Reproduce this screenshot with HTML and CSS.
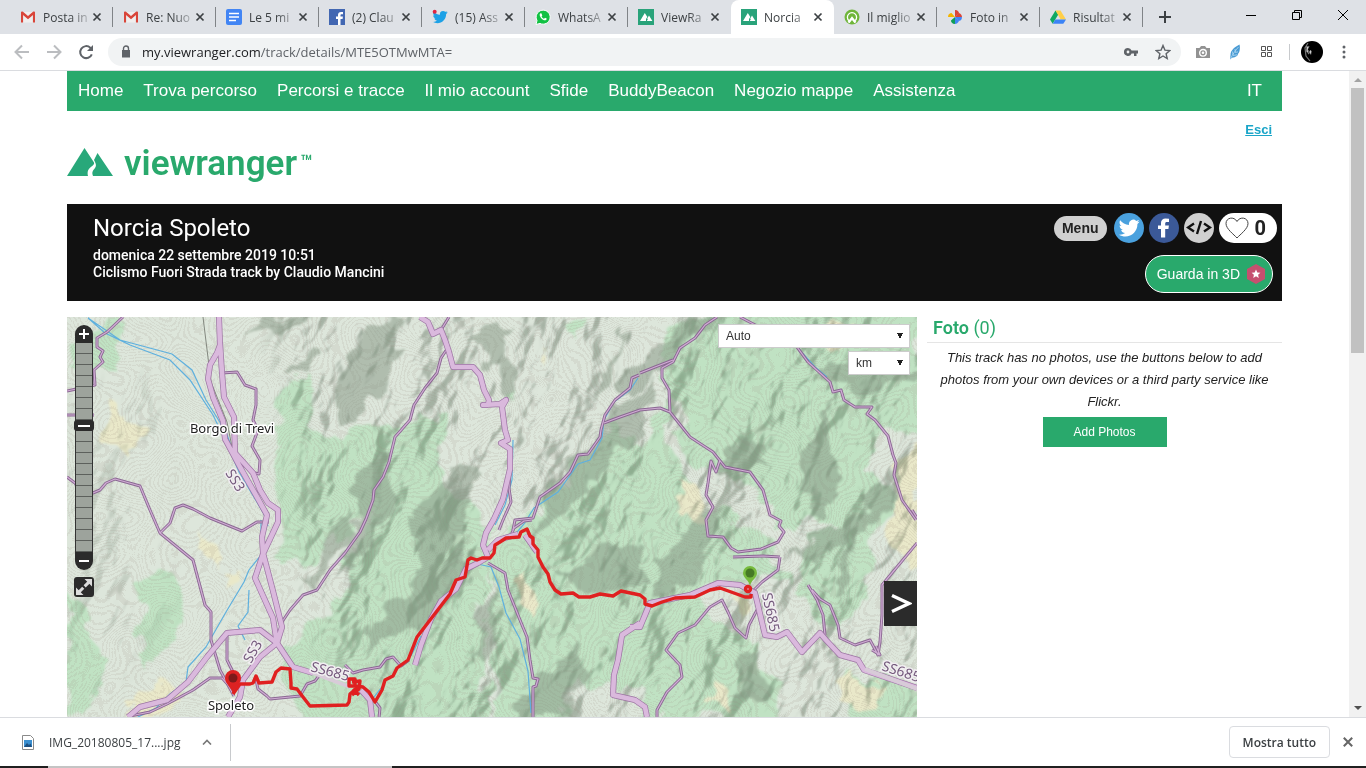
FILE: index.html
```html
<!DOCTYPE html>
<html lang="it">
<head>
  <meta charset="utf-8">
  <title>Norcia Spoleto</title>
  <link rel="stylesheet" href="styles.css">
</head>

<body>
  <svg class="defs" width="0" height="0" aria-hidden="true">
    <symbol id="gmail" viewBox="0 0 16 16">
      <path d="M1.500 3h13v10.500h-13z" fill="#f0eeee"/>
      <path d="M3 13.500V5l5 4 5-4v8.500" fill="none" stroke="#d9d6d6"/>
      <path d="M1 3.500v10h2V6l5 4.300L13 6v7.500h2v-10c0-1-1.200-1.300-2-.7L8 7 3 2.800c-.8-.6-2-.3-2 .7z" fill="#d9453a"/>
    </symbol>
    <symbol id="mountain" viewBox="0 0 16 16">
      <path d="M0 0h16v16H0z" fill="#29a37a"/>
      <path d="M2 12l4.800-8 2.500 4-1.300 2v2zM8.800 12l1-1.700-.6-.8L11 6.500l3.400 5.500z" fill="#fff"/>
    </symbol>
    <symbol id="close" viewBox="0 0 10 10">
      <path d="M1.500 1.500l7 7M8.500 1.500l-7 7" fill="none" stroke="currentColor" stroke-width="1.700"/>
    </symbol>
    <symbol id="bird" viewBox="0 0 24 24">
      <path d="M23.600 5c-.8.400-1.700.6-2.700.8 1-.6 1.700-1.500 2-2.600-.9.500-1.900.9-3 1.100A4.700 4.700 0 0 0 12 8.600C8 8.400 4.600 6.500 2.300 3.600c-1.200 2.100-.6 4.900 1.500 6.300-.8 0-1.500-.2-2.100-.6 0 2.200 1.500 4.300 3.800 4.700-.7.200-1.400.2-2.100.1.600 1.900 2.300 3.200 4.400 3.300A9.500 9.500 0 0 1 .8 19.300c10.300 5.500 20.600-1.700 20.400-11.700 1-.7 1.800-1.600 2.400-2.600z"/>
    </symbol>
  </svg>

  <nav class="tabs" aria-label="Schede">
    <div class="tab">
      <svg class="favicon"><use href="#gmail"/></svg><a href="#">Posta in</a>
      <button aria-label="Chiudi"><svg><use href="#close"/></svg></button>
    </div>
    <div class="tab">
      <svg class="favicon"><use href="#gmail"/></svg><a href="#">Re: Nuo</a>
      <button aria-label="Chiudi"><svg><use href="#close"/></svg></button>
    </div>
    <div class="tab">
      <svg class="favicon" viewBox="0 0 16 16"><rect width="16" height="16" rx="2" fill="#4285f4"/><path d="M3 4.500h10M3 8h10M3 11.500h7" stroke="#fff" stroke-width="1.600"/></svg><a href="#">Le 5 mi</a>
      <button aria-label="Chiudi"><svg><use href="#close"/></svg></button>
    </div>
    <div class="tab">
      <svg class="favicon" viewBox="0 0 16 16"><path d="M0 0h16v16H0z" fill="#4267b2"/><path d="M9 16v-6H7V7.600h2V6c0-2 1.200-3.100 3-3.100l2 .1v2.200h-1.300c-1 0-1.200.5-1.200 1.200v1.200h2.400l-.3 2.400h-2.100v6z" fill="#fff"/></svg><a href="#">(2) Clau</a>
      <button aria-label="Chiudi"><svg><use href="#close"/></svg></button>
    </div>
    <div class="tab">
      <svg class="favicon" viewBox="0 0 24 24" fill="#1da1e6"><use href="#bird"/><circle cx="4" cy="4" r="3" fill="#e02440"/></svg><a href="#">(15) Ass</a>
      <button aria-label="Chiudi"><svg><use href="#close"/></svg></button>
    </div>
    <div class="tab">
      <svg class="favicon" viewBox="0 0 16 16"><path d="M1 15.500l1-4A7 7 0 1 1 5 14.400z" fill="#12c144" stroke="#fff"/><path d="M5.500 4.300c-1.200.8-1.200 2.500.5 4.600 1.700 2 3.800 2.900 5 2.100.8-.5.800-1.200.6-1.400l-1.600-.8-.9 1c-1-.4-2-1.300-2.500-2.400l.7-.9-.7-1.800c-.3-.5-.7-.6-1.100-.4z" fill="#fff"/></svg><a href="#">WhatsA</a>
      <button aria-label="Chiudi"><svg><use href="#close"/></svg></button>
    </div>
    <div class="tab bare">
      <svg class="favicon"><use href="#mountain"/></svg><a href="#">ViewRa</a>
      <button aria-label="Chiudi"><svg><use href="#close"/></svg></button>
    </div>
    <div class="tab active">
      <svg class="favicon"><use href="#mountain"/></svg><a href="#">Norcia</a>
      <button aria-label="Chiudi"><svg><use href="#close"/></svg></button>
    </div>
    <div class="tab">
      <svg class="favicon" viewBox="0 0 16 16"><circle cx="8" cy="8" r="7.500" fill="#6fb53a"/><path d="M5 11.800A4.600 4.600 0 1 1 11 11.800" fill="none" stroke="#fff" stroke-width="1.300"/><path d="M3.500 13L8 7.300l4.500 5.700-2 1.300L8 11l-2.500 3.300z" fill="#fff"/></svg><a href="#">Il miglio</a>
      <button aria-label="Chiudi"><svg><use href="#close"/></svg></button>
    </div>
    <div class="tab">
      <svg class="favicon" viewBox="0 0 16 16"><path d="M8 8V1c3 0 4 2 4 3.500L8 8z" fill="#db4437"/><path d="M8 8h7c0 3-2 4-3.500 4z" fill="#4285f4"/><path d="M8 8v7c-3 0-4-2-4-3.500z" fill="#0f9d58"/><path d="M8 8H1c0-3 2-4 3.500-4z" fill="#f4b400"/><path d="M8 8l4-4c2 1 3 2.500 3 4z" fill="#db4437"/><path d="M8 8l4 4c-1 2-2.500 3-4 3z" fill="#4285f4"/></svg><a href="#">Foto in</a>
      <button aria-label="Chiudi"><svg><use href="#close"/></svg></button>
    </div>
    <div class="tab">
      <svg class="favicon" viewBox="0 0 16 16"><path d="M5.500 1.500L0 10.500l2.700 4.200L8.300 5.500z" fill="#11a861"/><path d="M5.500 1.500h5l5.500 9h-5.300z" fill="#ffcf48"/><path d="M5.400 10.500H16l-2.700 4.200H2.700z" fill="#3b83f6"/></svg><a href="#">Risultat</a>
      <button aria-label="Chiudi"><svg><use href="#close"/></svg></button>
    </div>
    <button class="new-tab" aria-label="Nuova scheda"><svg width="12" height="12"><path d="M6 0v12M0 6h12" stroke="#3c4043" stroke-width="2"/></svg></button>
    <div class="window-buttons">
      <button aria-label="Riduci"><svg width="10" height="10"><path d="M0 5.500h10" stroke="#000"/></svg></button>
      <button aria-label="Ripristina"><svg width="10" height="10"><path d="M.5 2.500h7v7h-7zM2.500 2V.5h7v7H8" fill="none" stroke="#000"/></svg></button>
      <button aria-label="Chiudi finestra"><svg width="10" height="10"><path d="M0 0l10 10M10 0L0 10" stroke="#000"/></svg></button>
    </div>
  </nav>

  <div class="toolbar">
    <button aria-label="Indietro"><svg class="off" width="16" height="16" viewBox="0 0 16 16"><path d="M15 8H2M8 1.500L1.500 8 8 14.500"/></svg></button>
    <button aria-label="Avanti"><svg class="off" width="16" height="16" viewBox="0 0 16 16"><path d="M1 8h13M8 1.500L14.500 8 8 14.500"/></svg></button>
    <button aria-label="Ricarica"><svg width="16" height="16" viewBox="0 0 16 16"><path d="M13.800 10.300A6 6 0 1 1 12.300 3.700L14 5.500" fill="none" stroke="#5f6368" stroke-width="2"/><path d="M15 1v6H9z" fill="#5f6368"/></svg></button>
    <div class="omnibox">
      <svg width="10" height="14" viewBox="0 0 10 14"><path d="M1 5h8v7.500H1z" fill="#5f6368"/><path d="M2.500 5.500V3.500a2.500 2.500 0 0 1 5 0v2" fill="none" stroke="#5f6368" stroke-width="1.400"/></svg>
      <a class="url" href="#">my.viewranger.com<span>/track/details/MTE5OTMwMTA=</span></a>
      <button aria-label="Password"><svg width="14" height="10" viewBox="0 0 14 10"><path d="M4 1a4 4 0 1 0 3.600 5.500H10V9h2.500V6.500H14v-3H7.600A4 4 0 0 0 4 1zm0 2.600a1.400 1.400 0 1 1 0 2.800 1.400 1.400 0 0 1 0-2.800z" fill="#5f6368" fill-rule="evenodd"/></svg></button>
      <button aria-label="Preferiti"><svg width="16" height="16" viewBox="0 0 16 16"><path d="M8 1.500l1.900 4.600 4.900.4-3.700 3.200 1.100 4.800L8 12l-4.200 2.500 1.100-4.800-3.700-3.200 4.900-.4z" fill="none" stroke="#5f6368" stroke-width="1.400"/></svg></button>
    </div>
    <button aria-label="Cattura"><svg width="16" height="14" viewBox="0 0 16 14"><path d="M1 3h3.500L6 1h4l1.500 2H15v10H1z" fill="#929292"/><circle cx="8" cy="7.800" r="3.300" fill="none" stroke="#fff" stroke-width="1.400"/><circle cx="8" cy="7.800" r="1.300" fill="#fff"/></svg></button>
    <button aria-label="Piuma"><svg width="12" height="16" viewBox="0 0 12 16"><path d="M10.500.5C6 3 1.500 6 1.500 11L1 15.500l2-1.700c4-.5 6-2 6-4 1.500-1 2.500-5.500 1.500-9.300z" fill="#4a9bd4"/><path d="M1.500 14.500C4 10 6 7 9.500 3M3.500 7.500L4 11M6 5l.3 3.500 2.700-.7M4 11.500l4-.7" fill="none" stroke="#b5dbf3" stroke-width=".8"/></svg></button>
    <button aria-label="App"><svg width="12" height="12"><path d="M.5.500h4v4h-4zM6.500.500h4v4h-4zM.5 6.500h4v4h-4zM6.500 6.500h4v4h-4z" fill="none" stroke="#555"/></svg></button>
    <span class="rule"></span>
    <button aria-label="Profilo"><svg width="22" height="22" viewBox="0 0 22 22"><circle cx="11" cy="11" r="11"/><path d="M7 2L4 7l1 8 4 5M8 5l-2 4 3 2-2 2" fill="none" stroke="#777" stroke-width="1.200"/><path d="M5.500 5l2 1-1 3 1 3-2-1zM9 9l1.500 1L10 14l-1-2z" fill="#ccc"/></svg></button>
    <button aria-label="Menu browser"><svg width="4" height="14" fill="#5f6368"><circle cx="2" cy="2" r="1.500"/><circle cx="2" cy="7" r="1.500"/><circle cx="2" cy="12" r="1.500"/></svg></button>
  </div>

  <div class="viewport">
    <div class="page">
      <nav class="main-nav">
        <a href="#">Home</a>
        <a href="#">Trova percorso</a>
        <a href="#">Percorsi e tracce</a>
        <a href="#">Il mio account</a>
        <a href="#">Sfide</a>
        <a href="#">BuddyBeacon</a>
        <a href="#">Negozio mappe</a>
        <a href="#">Assistenza</a>
        <a href="#" class="lang">IT</a>
      </nav>

      <header class="brand">
        <a href="#" class="logo">
          <svg width="46" height="28" viewBox="0 0 46 28" fill="#28a87a"><path d="M0 28L17.500 0 27 14.500c.5 1.500-.5 2.500-2.500 4-3.500 2.500-4.500 5-3.500 9.500z"/><path d="M26 28c-1.500-4 0-5.500 2-8 1.500-2 1.300-4-1-8L30.500 5 46 28z"/></svg>
          <span>viewranger</span><sup>™</sup>
        </a>
        <a href="#" class="logout">Esci</a>
      </header>

      <section class="track-head">
        <div class="track-title">
          <h1>Norcia Spoleto</h1>
          <p>domenica 22 settembre 2019 10:51</p>
          <p>Ciclismo Fuori Strada track by Claudio Mancini</p>
        </div>
        <div class="actions">
          <div class="share">
            <button class="menu">Menu</button>
            <button class="round twitter" aria-label="Twitter"><svg width="22" height="22" fill="#fff"><use href="#bird"/></svg></button>
            <button class="round facebook" aria-label="Facebook"><svg width="14" height="20" viewBox="0 0 14 20"><path d="M4 19.500V11H1V7.500h3V5c0-3 1.800-4.500 4.500-4.500L12 .700V4h-2C8.500 4 8.200 4.700 8.200 5.700v1.800h3.700l-.5 3.500H8.200v8.500z" fill="#fff"/></svg></button>
            <button class="round embed" aria-label="Incorpora"><svg width="26" height="16" viewBox="0 0 26 16"><path d="M8 3.500L2 7.500l6 4M18 3.500l6 4-6 4M15 1l-4 13" fill="none" stroke="#111" stroke-width="2.400"/></svg></button>
            <button class="like" aria-label="Mi piace"><svg width="24" height="22" viewBox="0 0 24 22"><path d="M12 21C9 17.500 1 12 1 6.500 1 .500 9-1 12 4.500 15-1 23 .500 23 6.500 23 12 15 17.500 12 21z" fill="none" stroke="#444"/></svg><span>0</span></button>
          </div>
          <button class="view-3d">Guarda in 3D <svg width="18" height="20" viewBox="0 0 18 20"><path d="M9 0l9 5v10l-9 5-9-5V5z" fill="#c5506f"/><path d="M9 5.500l1.300 2.900 3.100.3-2.300 2.100.6 3.100L9 12.300l-2.700 1.600.6-3.100-2.300-2.100 3.100-.3z" fill="#fff"/></svg></button>
        </div>
      </section>

      <div class="columns">
        <div class="map">
          <svg class="map-canvas" viewBox="67 317 850 400" preserveAspectRatio="xMinYMin slice" role="img" aria-label="Mappa del percorso">
            <defs>
              <filter id="relief" x="0" y="0" width="1" height="1" color-interpolation-filters="sRGB">
                <feTurbulence type="fractalNoise" baseFrequency=".012 .02" numOctaves="4" seed="8"/>
                <feDiffuseLighting surfaceScale="19" diffuseConstant="1.270" lighting-color="#fff"><feDistantLight azimuth="240" elevation="54"/></feDiffuseLighting>
                <feComponentTransfer><feFuncR type="table" tableValues=".74 .75 .78 .87 .98 1"/><feFuncG type="table" tableValues=".77 .78 .8 .88 .98 1"/><feFuncB type="table" tableValues=".74 .75 .78 .87 .98 1"/></feComponentTransfer>
                <feGaussianBlur stdDeviation=".7"/>
              </filter>
              <filter id="contours" x="0" y="0" width="1" height="1" color-interpolation-filters="sRGB">
                <feTurbulence type="fractalNoise" baseFrequency=".014" numOctaves="2" seed="3"/>
                <feColorMatrix values="0 0 0 0 .62  0 0 0 0 .56  0 0 0 0 .52  1 0 0 0 0"/>
                <feComponentTransfer><feFuncA type="discrete" tableValues="0 0 1 0 0 1 0 0 1 0 0 1 0 0 1 0 0 1 0 0 1 0 0 1 0 0 1 0 0 1 0 0 1 0 0 1 0 0 1 0 0 1 0 0 1 0 0 1 0 0 1 0 0 1 0 0 1 0 0 1 0 0 1 0 0 1 0 0 1 0 0 1 0 0 1 0 0 1 0 0 1 0 0 1 0 0 1 0 0 1 0 0 1 0 0 1"/></feComponentTransfer>
              </filter>
              <filter id="rough" x="-.1" y="-.1" width="1.200" height="1.200">
                <feTurbulence type="fractalNoise" baseFrequency=".04" numOctaves="3" seed="5"/>
                <feDisplacementMap in="SourceGraphic" scale="34" xChannelSelector="R" yChannelSelector="G"/>
                <feGaussianBlur stdDeviation=".8"/>
              </filter>
              <filter id="soft"><feGaussianBlur stdDeviation="14"/></filter>
              <mask id="hills"><path d="M275 290h680v450H380L300 600l-10-130z" fill="#fff" filter="url(#soft)"/><path d="M70 400l80-20 20 60-20 60 20 110-80 90H60z" fill="#777" filter="url(#soft)"/></mask>
              <g id="minor">
                <path d="M123 317l-16 15-10 6v9l6 4-3 6 3 5-9 8 1 15-28 6M67 477l8 6 3 5 15 5 7-3 6-7 9-4 25 7 10 24 10 23 33 27 12 45 6 7v28l9 30 14 26M160 533l10-10 5-15 8-3 10 4 17 9 32 13 15-9h12M67 415h27"/>
                <path d="M222 373l15-1 8 13 11 4v16l-3 15 5 10-6 16 8 14-1 14-9-2M227 633v27l6 12M233 690l-11-12h-12l-17 12-26 14-17 8-20 4M256 680l2 9 9 7 3 3 30-3 7-12 8-3 6-8"/>
                <path d="M282 622l8-12 13-15 14-5 13-20 15-17 15-21 6-13 7-19 1-10 9-13 6-15 6-25 15-17 4-15 11-17 12-15 4-15 6-9M441 330l8-13M345 665l8 8 10-3 17-3 6-8 7-2 8 9 8-6"/>
                <path d="M510 470l-1 18 2 14-8 18-4 10M639 375l-7 3-2 10-15 12-10 15-4 15-1 7-12 17-10 1-8 17-10 11-20 14-7 21-18 2-2 10M604 423l16-6 20-7 20-2 10 4 20 25 23 15 12 15 25 5 13 18 7 25 11 6-2 5 5 6-6 10-17 7-23 3-7-4-8-11-15-1-2-16 7-13-7-12 2-12 3-22 5 11 4-12M717 317l-12 8-10 13-15 10-7 14-11 6v10l7 12 1 22M673 360l-18 7-15 6"/>
                <path d="M740 317l57 30 11 15 22 20 3 10 8-2 3 10 11 7 17 0-5 7 8 6 13 16 5 19 3 8-2 12 8 25 14 20M780 557l-2 13-16 12-10 10M733 557l30-1 17 1M757 610l-8 15-3 13-11-10-7-16-6-12-12 7-15 18-17 8-12 17 14 15 2 12-15 15-10 18v7"/>
                <path d="M808 585l9 15 6 15 2 20M812 590l8 9 10 6 8 20 2 13 15 7 15-5 8 15 2-13 2-27v-30l35-42M872 650l8 5-4-9M488 563l17 10 3 17 12 30 7 17 3 23 3 18 5 1-2 7-3 1v30l-2 6M912 510l5 8M374 700l6 8-1 10M510 538l4-10 10-7 8-1"/>
              </g>
              <g id="major">
                <path d="M219 317l1 28-3 8-7 12-2 14 5 18 10 24 2 18 15 28 17 30 10 18-5 22 1 16 10 38 9 36-5 16M220 343l2 30 2 24 10 20 1 36 18 20 7 17 8 13 10 7v12l-15 32-8 24 18 40 4 26"/>
                <path d="M277 643l-17-13-33 3-20 24-19 25-21 18-27 7-12 10M277 643l-17 14-17 23-3 17-12 20M277 643l16 24 20 6M361 690l9 10 2 17"/>
                <path d="M420 317l8 5 5 12 8-4 4 10 4 12 4 15h20l7 8 4 15 5 10-1 5h-5l17-1 6-4-4 7 3 23 3 10-7 3 9 6v20l-7 30-9 20-8 14-3 12 5 12-10 6-12 6-10 20-15 12-10 18-10 26-6 20M488 550l10-10 20-6M525 535l12 17"/>
                <path d="M630 627l10 0 10-24 40-8 28-12 22 2 15 8 10 42 12 2 10-5 15 20 18-19 6 7 14 15 18 5 6 10 53 18M640 623l-18 12-4 25-4 15-1 20 22 5 10 7 2 10"/>
              </g>
            </defs>
            <path d="M67 317h850v400H67z" fill="#dde6db"/>

            <!-- woods -->
            <g filter="url(#rough)" fill="#c0e2c3">
              <path d="M275 400l30-30 10 60 30 10 15-20 35 15 20-20 30 5-5 60 30 20 20 30-10 70 10 130H300l-20-70 60-60 30-90-60 50-30 10z"/>
              <path d="M485 560l40-50 40-30 50-60 20 30 30-50 0 40 30 50-20 50 30 70-30 60-60 20-40-10-20 50 30 90h-80z"/>
              <path d="M660 330l60-20 200 0v130l-40-10-10 40 30 30-30 50-50-30-40 10-30-50-60-20-20-70z"/>
              <path d="M650 520l70-10 50 30 20 40-60 0-30 20 0 30-60 20-20-60zM640 640l60-30 50 30 30 50 0 30H640zM810 540l60-40 0 90-40 40-30-40zM840 670l80 20v40h-60z"/>
              <path d="M140 580l30-10 20 30-10 30-30 40-10-30zM67 590l30 40 10 60-40 30zM67 340l60-20-20 50-40 0zM500 400l15-10 0 15zM570 317l12 0 0 22-8-5z"/>
            </g>
            <g filter="url(#rough)" fill="#e9e8c9">
              <path d="M105 400l40 30-20 30-20-20zM200 530l20 10-5 30-15-20zM225 570l15 0-10 20zM125 690l40-10 20 20-30 20h-30zM520 570l20 30-5 20-15-20zM680 480l30 20-5 25-30-10zM890 460l30-10 0 110-25 0zM705 680l20 10 10 25-30-10zM845 670l40 20-10 20-40-10zM730 590l20 10-15 20zM545 350l8 5-5 10zM820 325l35 0 0 15-30 5z"/>
            </g>

            <g mask="url(#hills)" class="relief">
              <g transform="rotate(-58 490 510)"><rect x="-40" y="0" width="1060" height="1060" filter="url(#relief)"/></g>
            </g>
            <rect x="67" y="317" width="850" height="400" filter="url(#contours)" opacity=".13"/>

            <!-- ridges in shade -->
            <g filter="url(#rough)" fill="#80927f" opacity=".48">
              <path d="M385 317l25 0-30 50-40 60-15-10 30-70zM360 470l30-20 5 50-30 60-20 10zM425 500l40-40 20 10-40 90-25 30-10-60zM440 570l30-30 0 30-30 50-80 30 20-40z"/>
              <path d="M505 350l10 40-10 20zM590 400l20-50 15-20-20 60-30 20zM540 500l50-60 40-40 30-20-20 50-60 70-50 40zM480 620l15-50 0 70-20 30z"/>
              <path d="M520 700l60-60 10 30-30 50h-40zM560 580l40-40 40 10 10 30-60 10zM720 450l40-5 10 20-50 10zM690 317l40 0-40 30-60 50-10-20zM830 400l10 90-20 30-20-60z"/>
              <path d="M870 490l30-30-5 40-40 40-10 60-15-10 20-60zM790 555l60-45 20 0-50 50zM660 560l50-60 10 10-20 70-45 20zM740 660l20-10 10 40-30 10zM815 370l60-15 40 20-60 20z"/>
              <path d="M250 330l40-13 20 3-30 15zM285 370l30-20 5 10-30 15zM325 420l50-70 30 0-40 60-30 20zM300 580l50-70 0 30-40 50zM470 340l40-20-5 60z"/>
            </g>

            <!-- rivers -->
            <g fill="none" stroke="#5fb0de" stroke-width="1.200">
              <path d="M88 318l17 15 25 12 40 15 20 20 23 35 12 25 14 32 25 42 4 12M88 318l32 22 52 14 20 16 14 30 20 32 6 16M261 520l0 35-12 15-5 12-18 30-20 35-18 20-2 15-16 12-14 14-24 12M249 590l-1 22-10 14 7 14"/>
              <path d="M513 440l-1 40-7 25-10 20M473 563l18 4 8 20 7 26 14 26 8 32 3 42M638 378l-8 12-16 12-10 18-2 18-12 22-12 4-20 28-24 16-10 16-12 14M797 347l18 20 12 10M385 683l-14 18 3 14M411 656l10-20"/>
            </g>
            <path d="M203 317l8 65 16 40 6 30 22 40" fill="none" stroke="#83887f"/>

            <!-- each road is a dark casing with a lighter line on it -->
            <use href="#minor" class="minor-casing"/>
            <use href="#minor" class="minor-road"/>
            <use href="#major" class="major-casing"/>
            <use href="#major" class="major-road"/>
            <path d="M313 673l37 14M865 669l52 20" stroke="#d8cbd8" stroke-width="4"/>

            <g class="road-label">
              <text transform="translate(225 473) rotate(58)">SS3</text>
              <text transform="translate(251 664) rotate(-60)">SS3</text>
              <text transform="translate(310 671) rotate(15)">SS685</text>
              <text transform="translate(762 594) rotate(78)">SS685</text>
              <text transform="translate(881 670) rotate(18)">SS685</text>
            </g>
            <g class="place">
              <text x="232" y="433">Borgo di Trevi</text>
              <text x="231" y="710">Spoleto</text>
            </g>

            <path class="route" d="M233 694L240 684 250 684 253 683 256 676 259 683 272 682 276 672 281 668 290 669 291 683 291 688 297 689 303 697 310 706 347 705 349 702 350 694 358 687"/>
            <path class="route" d="M349 679h6v7h-6zM352 682l8-1-1 8-7 6M353 689l6 6M356 686L363 687 369 692 375 702 382 690 385 680 393 676 397 668 408 660 417 637 450 594 456 580 465 577 468 560 471 558 477 560 482 558 490 558 494 553 495 545 500 542 506 538 519 537 521 532 527 529 530 536 533 538 533 544 538 550 538 557 543 567 548 574 550 582 555 590 561 594 573 593 579 597 590 597 600 594 613 596 621 591 640 595 645 599 645 604 652 606 662 602 675 598 695 597 710 590 720 588 745 597 751 597 751 594"/>
            <circle class="route" cx="748" cy="589" r="2.500"/>
            <path d="M233 694c-1-6-8-10-8-16a8 8 0 0 1 16 0c0 6-7 10-8 16z" fill="#dc2222"/><circle cx="233" cy="678" r="4.500" fill="#7d1a1a"/>
            <path d="M750 586c-1-6-7-8-7-13a7 7 0 0 1 14 0c0 5-6 7-7 13z" fill="#77bb3d"/><circle cx="750" cy="573" r="4.500" fill="#467a24"/>
          </svg>

          <div class="zoom">
            <button class="plus" aria-label="Ingrandisci"></button>
            <input type="range" min="0" max="18" value="11" aria-label="Zoom">
            <button class="minus" aria-label="Riduci"></button>
          </div>
          <button class="fullscreen" aria-label="Schermo intero"><svg width="20" height="20" viewBox="0 0 20 20"><path d="M5 15L15 5" stroke="#ddd" stroke-width="3" stroke-dasharray="6 2"/><path d="M10.500 2H18v7.500zM2 10.500V18h7.500z" fill="#ddd"/></svg></button>
          <div class="map-options">
            <select aria-label="Tipo di mappa"><option>Auto</option></select>
            <select class="units" aria-label="Unità"><option>km</option></select>
          </div>
          <button class="expand" aria-label="Espandi"><svg width="22" height="22" viewBox="0 0 22 22"><path d="M2 2.500l17 8L2 18.500" fill="none" stroke="#fff" stroke-width="3.400"/></svg></button>
        </div>

        <aside class="photos">
          <h2>Foto <span>(0)</span></h2>
          <p>This track has no photos, use the buttons below to add photos from your own devices or a third party service like Flickr.</p>
          <button>Add Photos</button>
        </aside>
      </div>
    </div>
    <div class="scrollbar"><i class="up"></i><div class="thumb"></div><i class="down"></i></div>
  </div>

  <footer class="downloads">
    <a href="#" class="file"><svg width="12" height="15" viewBox="0 0 12 15"><path d="M.5.500h8l3 3v11H.5z" fill="#fff" stroke="#8a8a8a"/><path d="M2 5h8v7H2z" fill="#3a8fd0"/><path d="M2 12l3-4 2 2 1.500-1.500L10 12z" fill="#1d4f80"/></svg>IMG_20180805_17....jpg</a>
    <button aria-label="Opzioni file"><svg width="10" height="6"><path d="M1 5.500l4-4 4 4" fill="none" stroke="#777" stroke-width="1.600"/></svg></button>
    <span class="rule"></span>
    <button class="show-all">Mostra tutto</button>
    <button aria-label="Chiudi barra"><svg width="12" height="12" viewBox="0 0 10 10"><use href="#close"/></svg></button>
  </footer>
  <div class="taskbar"></div>
</body>

</html>
```
FILE: styles.css
```css
:root {
  --green: #29a96c;
  --chrome: #dee1e6;
  --grey: #5f6368;
  --dark: #2b2b2b;
  --ui-font: "Open Sans", "Noto Sans", sans-serif;
  --title-font: Roboto, sans-serif;
}

* {
  box-sizing: border-box;
}

body {
  margin: 0;
  height: 100vh;
  display: flex;
  flex-direction: column;
  overflow: hidden;
  background: white;
  color: #222;
  font-family: "Liberation Sans", Arial, sans-serif;
}

.defs {
  position: absolute;
}

a {
  color: inherit;
  text-decoration: none;
}

button {
  border: none;
  padding: 0;
  background: none;
  color: inherit;
  font-family: inherit;
  display: flex;
  align-items: center;
  justify-content: center;
}

h1, h2, p {
  margin: 0;
}

/* browser tabs */
.tabs {
  display: flex;
  flex: none;
  height: 34px;
  padding-left: 10px;
  background: var(--chrome);
  font-family: var(--ui-font);
  font-size: 12px;
  color: #3c4043;
}

.tab {
  display: flex;
  align-items: center;
  flex: 0 0 103px;
  padding-left: 10px;
  background: linear-gradient(#808387, #808387) right center / 1px 20px no-repeat;
}

.tab a {
  width: 49px;
  margin-left: 7px;
  white-space: nowrap;
  mask-image: linear-gradient(to right, #000 55%, rgba(0, 0, 0, 0.1));
}

.tab svg {
  width: 10px;
  height: 10px;
}

.tab .favicon {
  width: 16px;
  height: 16px;
  flex: none;
}

.tab.bare {
  background: none;
}

.tab.active {
  background: white;
  border-radius: 8px 8px 0 0;
}

.new-tab {
  width: 44px;
}

.window-buttons {
  display: flex;
  margin-left: auto;
  height: 29px;
}

.window-buttons button {
  width: 46px;
}

/* address bar */
.toolbar {
  display: flex;
  align-items: center;
  flex: none;
  height: 37px;
  padding: 0 6px;
  border-bottom: 1px solid #dadce0;
}

.toolbar button {
  width: 32px;
}

.off {
  fill: none;
  stroke: #bbbdc0;
  stroke-width: 2;
}

.omnibox {
  display: flex;
  align-items: center;
  flex: 1;
  height: 28px;
  margin: 0 6px;
  padding: 0 2px 0 13px;
  border-radius: 14px;
  background: #f1f3f4;
}

.url {
  flex: 1;
  margin-left: 11px;
  font-family: var(--ui-font);
  font-size: 13px;
  color: #202124;
}

.url span {
  color: var(--grey);
}

.rule {
  width: 1px;
  height: 16px;
  margin: 0 6px;
  background: #c8cacd;
}

/* page */
.viewport {
  display: flex;
  flex: 1;
  min-height: 0;
}

.page {
  display: flex;
  flex-direction: column;
  flex: 1;
  padding: 0 67px;
}

.scrollbar {
  display: flex;
  flex-direction: column;
  align-items: center;
  width: 17px;
  background: #f1f1f1;
}

.scrollbar i {
  margin: 7px 0 6px;
  border: 4px solid transparent;
  border-top: none;
  border-bottom-color: #a3a3a3;
}

.scrollbar .down {
  margin: auto 0 7px;
  border-top: 4px solid #505050;
  border-bottom: none;
}

.thumb {
  width: 13px;
  height: 41%;
  background: #c1c1c1;
}

.main-nav {
  display: flex;
  align-items: center;
  flex: none;
  gap: 20px;
  height: 40px;
  padding: 0 20px 0 11px;
  background: var(--green);
  color: white;
  font-size: 17px;
}

.lang {
  margin-left: auto;
}

.brand {
  display: flex;
  justify-content: space-between;
  align-items: flex-start;
  height: 93px;
  padding: 10px 10px 0 0;
}

.logo {
  display: flex;
  align-items: flex-start;
  margin-top: 27px;
  color: var(--green);
  font-family: var(--title-font);
  font-weight: 500;
}

.logo span {
  margin-left: 11px;
  font-size: 35px;
  font-weight: 600;
  line-height: 32px;
}

.logo sup {
  margin-left: 3px;
  font-size: 20px;
  line-height: 28px;
}

.logout {
  color: #1aa5c8;
  font-size: 13px;
  font-weight: bold;
  line-height: 17px;
  text-decoration: underline;
}

.track-head {
  display: flex;
  justify-content: space-between;
  flex: none;
  height: 97px;
  padding: 9px 5px 8px 26px;
  background: #111;
  color: white;
}

.track-title {
  font-family: var(--title-font);
  font-size: 14px;
  font-weight: 500;
  line-height: 17px;
}

.track-title h1 {
  margin-bottom: 3px;
  font-size: 24px;
  font-weight: 400;
  line-height: 31px;
}

.actions {
  display: flex;
  flex-direction: column;
  justify-content: space-between;
  align-items: flex-end;
}

.share {
  display: flex;
  align-items: center;
  gap: 5px;
}

.menu {
  height: 25px;
  margin-right: 2px;
  padding: 0 8px;
  border-radius: 13px;
  background: #d0d0d0;
  color: #222;
  font-size: 14px;
  font-weight: bold;
}

.round {
  width: 30px;
  height: 30px;
  border-radius: 50%;
}

.twitter {
  background: #4aa1de;
}

.facebook {
  background: #3b5998;
}

.embed {
  background: #d0d0d0;
}

.like {
  gap: 6px;
  height: 30px;
  padding: 0 11px 0 6px;
  border-radius: 15px;
  background: white;
  color: #222;
  font-family: var(--title-font);
  font-size: 20px;
  font-weight: bold;
}

.view-3d {
  gap: 7px;
  height: 38px;
  margin-right: 4px;
  padding: 0 7px 0 11px;
  border: 1px solid white;
  border-radius: 19px;
  background: var(--green);
  font-size: 14px;
}

/* map and photos */
.columns {
  display: grid;
  grid-template-columns: 850fr 355fr;
  gap: 10px;
  flex: 1;
  min-height: 0;
  margin-top: 16px;
}

.map {
  position: relative;
  min-height: 0;
  overflow: hidden;
}

.map-canvas {
  display: block;
  width: 100%;
  height: 100%;
}

.relief {
  mix-blend-mode: multiply;
}

.minor-casing, .minor-road, .major-casing, .major-road {
  fill: none;
  stroke: #8b6893;
  stroke-width: 3;
  stroke-linejoin: round;
}

.minor-road {
  stroke: #d0add4;
  stroke-width: 1.2;
}

.major-casing {
  stroke: #9c74a3;
  stroke-width: 6;
}

.major-road {
  stroke: #dab9dd;
  stroke-width: 4.6;
}

.road-label {
  fill: #745a7c;
  stroke: #f1eef1;
  stroke-width: 3;
  paint-order: stroke;
  font: 14px "Noto Sans", sans-serif;
}

.place {
  fill: #222;
  stroke: white;
  stroke-width: 3;
  paint-order: stroke;
  text-anchor: middle;
  font: 13px "Noto Sans", sans-serif;
}

.route {
  fill: none;
  stroke: #e02020;
  stroke-width: 3.4;
  stroke-linejoin: round;
}

.zoom {
  position: absolute;
  top: 8px;
  left: 7px;
  display: flex;
  flex-direction: column;
  align-items: center;
  width: 20px;
}

.zoom button {
  width: 18px;
  height: 18px;
  background: linear-gradient(white, white) center / 10px 2px no-repeat var(--dark);
}

.zoom .plus {
  border-radius: 9px 9px 0 0;
  background: linear-gradient(white, white) center / 10px 2px no-repeat, linear-gradient(white, white) center / 2px 10px no-repeat var(--dark);
}

.zoom .minus {
  border-radius: 0 0 9px 9px;
}

.zoom input {
  appearance: none;
  writing-mode: vertical-lr;
  direction: rtl;
  width: 20px;
  height: 209px;
  margin: 0;
  background: repeating-linear-gradient(#9da39c 0 10px, #5c605c 10px 11px) center / 16px 100% no-repeat, linear-gradient(#333, #333) center / 18px 100% no-repeat;
}

.zoom input::-webkit-slider-thumb {
  appearance: none;
  width: 20px;
  height: 11px;
  border-radius: 3px;
  background: linear-gradient(white, white) center / 12px 2px no-repeat var(--dark);
}

.fullscreen {
  position: absolute;
  top: 260px;
  left: 7px;
  border-radius: 3px;
  background: var(--dark);
}

.map-options {
  position: absolute;
  top: 7px;
  right: 7px;
  display: flex;
  flex-direction: column;
  align-items: flex-end;
  gap: 3px;
}

.map-options select {
  appearance: none;
  width: 192px;
  height: 24px;
  padding: 0 7px;
  border: 1px solid #ccc;
  border-radius: 0;
  background: linear-gradient(to bottom right, #222 50%, transparent 50%) right 6px center / 3px 6px no-repeat, linear-gradient(to bottom left, #222 50%, transparent 50%) right 9px center / 3px 6px no-repeat white;
  color: #333;
  font-family: inherit;
  font-size: 12px;
}

.map-options .units {
  width: 62px;
}

.expand {
  position: absolute;
  top: 264px;
  right: 0;
  width: 33px;
  height: 45px;
  background: var(--dark);
}

.photos {
  color: #222;
  font-size: 13px;
  line-height: 22px;
  text-align: center;
}

.photos h2 {
  padding: 0 6px 3px;
  border-bottom: 1px solid #e5e5e5;
  color: var(--green);
  font-family: var(--title-font);
  font-size: 18px;
  font-weight: 600;
  text-align: left;
}

.photos h2 span {
  font-weight: 400;
}

.photos p {
  padding: 4px 10px;
  font-style: italic;
}

.photos button {
  width: 124px;
  height: 30px;
  margin: 0 auto;
  background: var(--green);
  color: white;
  font-size: 12px;
}

/* download shelf */
.downloads {
  display: flex;
  align-items: center;
  flex: none;
  height: 49px;
  padding: 0 12px 0 22px;
  border-top: 1px solid #dadce0;
  font-family: var(--ui-font);
  font-size: 12px;
  color: #3c4043;
}

.file {
  display: flex;
  align-items: center;
  gap: 15px;
}

.file + button {
  width: 20px;
  margin-left: 16px;
}

.downloads .rule {
  height: 37px;
  margin: 0 auto 0 13px;
}

.show-all {
  height: 32px;
  margin-right: 12px;
  padding: 0 13px;
  border: 1px solid #dadce0;
  border-radius: 4px;
  font-size: 12px;
  font-weight: 600;
}

.downloads > button:last-child {
  color: #666;
}

.taskbar {
  flex: none;
  height: 2px;
  background: linear-gradient(to right, #202020 48px, #c4c4c4 48px 392px, #202020 392px);
}
```
